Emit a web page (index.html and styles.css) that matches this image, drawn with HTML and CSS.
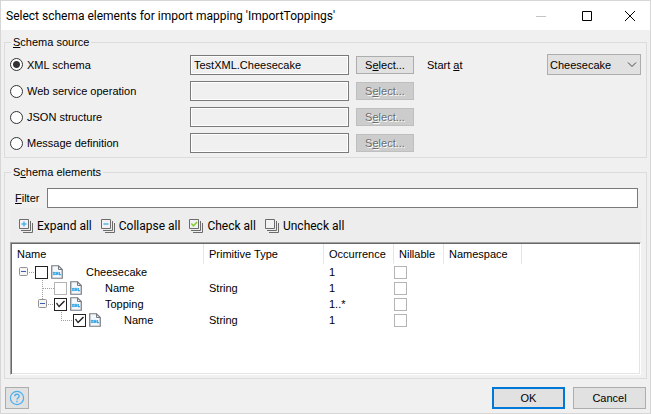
FILE: index.html
```html
<!DOCTYPE html>
<html lang="en">
<head>
<meta charset="utf-8">
<title>Select schema elements</title>
<link rel="stylesheet" href="styles.css">
</head>
<body>
<svg class="defs" aria-hidden="true">
  <symbol id="xml" viewBox="0 0 12 14">
    <path d="M.75 .75H7.5L11.25 4.5V13.25H.75Z" fill="#f4f8fb" stroke="#747a80" stroke-width="1.2"/>
    <path d="M7.5 .75V4.5H11.25" fill="none" stroke="#747a80"/>
    <path d="M2 7L4 10M4 7L2 10M5 10V7L6 9L7 7V10M8.5 7V9.6H10" fill="none" stroke="#3aa9e8" stroke-width="1.1"/>
  </symbol>
  <symbol id="stack" viewBox="0 0 14 14">
    <path d="M.5 .5H9.5V9.5H.5Z" fill="#f2f2f2" stroke="#6b6b6b"/>
    <path d="M2 11.5H11.5V2M4 13.5H13.5V4" fill="none" stroke="#6b6b6b"/>
  </symbol>
</svg>
<div class="dialog">
  <header class="titlebar">
    <h1>Select schema elements for import mapping 'ImportToppings'</h1>
    <div class="window-buttons">
      <button type="button" disabled aria-label="Minimize"><svg width="10" height="10"><path d="M0 5.5H10" stroke="#c4c4c4"/></svg></button>
      <button type="button" aria-label="Maximize"><svg width="10" height="10"><path d="M.5 .5H9.5V9.5H.5Z" fill="none" stroke="#000"/></svg></button>
      <button type="button" aria-label="Close"><svg width="10" height="10"><path d="M0 0L10 10M10 0L0 10" stroke="#000"/></svg></button>
    </div>
  </header>
  <form class="content">
    <fieldset class="source">
      <legend><u>S</u>chema source</legend>
      <div class="source-row">
        <label><input type="radio" name="source" checked>XML schema</label>
        <input class="field" type="text" aria-label="XML schema source" value="TestXML.Cheesecake" readonly>
        <button class="pick" type="button">S<u>e</u>lect...</button>
        <label class="start" for="start">Start <u>a</u>t</label>
        <span class="combo"><select id="start"><option>Cheesecake</option></select><svg width="10" height="6"><path d="M1 .5L5 4.5L9 .5" fill="none" stroke="#444"/></svg></span>
      </div>
      <div class="source-row">
        <label><input type="radio" name="source">Web service operation</label>
        <input class="field" type="text" aria-label="Web service operation source" readonly>
        <button class="pick" type="button" disabled>S<u>e</u>lect...</button>
      </div>
      <div class="source-row">
        <label><input type="radio" name="source">JSON structure</label>
        <input class="field" type="text" aria-label="JSON structure source" readonly>
        <button class="pick" type="button" disabled>S<u>e</u>lect...</button>
      </div>
      <div class="source-row">
        <label><input type="radio" name="source">Message definition</label>
        <input class="field" type="text" aria-label="Message definition source" readonly>
        <button class="pick" type="button" disabled>S<u>e</u>lect...</button>
      </div>
    </fieldset>
    <fieldset class="elements">
      <legend>S<u>c</u>hema elements</legend>
      <div class="filter"><label for="filter"><u>F</u>ilter</label><input class="field" id="filter" type="text"></div>
      <div class="toolbar">
        <button type="button"><svg width="14" height="14"><use href="#stack"/><path d="M5 2.5V7.5M2.5 5H7.5" stroke="#4aaff0" stroke-width="1.4"/></svg>Expand all</button>
        <button type="button"><svg width="14" height="14"><use href="#stack"/><path d="M2.5 5H7.5" stroke="#4aaff0" stroke-width="1.4"/></svg>Collapse all</button>
        <button type="button"><svg width="14" height="14"><use href="#stack"/><path d="M2.3 4.5L4.5 6.8L8 3" fill="none" stroke="#86cc30" stroke-width="1.5"/></svg>Check all</button>
        <button type="button"><svg width="14" height="14"><use href="#stack"/></svg>Uncheck all</button>
      </div>
      <div class="tree">
        <table>
          <colgroup><col class="c-name"><col class="c-type"><col class="c-occ"><col class="c-nil"><col class="c-ns"><col></colgroup>
          <thead><tr><th>Name</th><th>Primitive Type</th><th>Occurrence</th><th>Nillable</th><th>Namespace</th><td></td></tr></thead>
          <tbody>
            <tr>
              <td><div class="node"><svg width="23" height="16"><path d="M17 8.5H23" class="guide"/><rect x="7.5" y="3.5" width="8" height="8" rx="1" class="box"/><path d="M9 7.5H14" class="minus"/></svg><input type="checkbox" aria-label="Cheesecake"><svg class="doc" width="12" height="14"><use href="#xml"/></svg>Cheesecake</div></td>
              <td></td><td>1</td><td><input type="checkbox" disabled aria-label="Cheesecake nillable"></td><td></td><td></td>
            </tr>
            <tr>
              <td><div class="node"><svg width="42" height="16"><path d="M30.5 0V16M31 8.5H42" class="guide"/></svg><input type="checkbox" disabled aria-label="Name"><svg class="doc" width="12" height="14"><use href="#xml"/></svg>Name</div></td>
              <td>String</td><td>1</td><td><input type="checkbox" disabled aria-label="Name nillable"></td><td></td><td></td>
            </tr>
            <tr>
              <td><div class="node"><svg width="42" height="16"><path d="M30.5 0V3M36 8.5H42" class="guide"/><rect x="26.5" y="3.5" width="8" height="8" rx="1" class="box"/><path d="M28 7.5H33" class="minus"/></svg><input type="checkbox" checked aria-label="Topping"><svg class="doc" width="12" height="14"><use href="#xml"/></svg>Topping</div></td>
              <td></td><td>1..*</td><td><input type="checkbox" disabled aria-label="Topping nillable"></td><td></td><td></td>
            </tr>
            <tr>
              <td><div class="node"><svg width="61" height="16"><path d="M49.5 0V8M49 8.5H61" class="guide"/></svg><input type="checkbox" checked aria-label="Topping name"><svg class="doc" width="12" height="14"><use href="#xml"/></svg>Name</div></td>
              <td>String</td><td>1</td><td><input type="checkbox" disabled aria-label="Topping name nillable"></td><td></td><td></td>
            </tr>
          </tbody>
        </table>
      </div>
    </fieldset>
    <footer>
      <button class="help" type="button" aria-label="Help"><svg width="16" height="16"><circle cx="8" cy="8" r="6.6" fill="none" stroke="#4aaff0" stroke-width="1.2"/><path d="M5.8 6.3C5.8 3.6 10.2 3.6 10.2 6.2C10.2 7.8 8 7.8 8 9.6M8 10.8V12.3" fill="none" stroke="#4aaff0" stroke-width="1.4"/></svg></button>
      <button class="action ok" type="submit">OK</button>
      <button class="action" type="button">Cancel</button>
    </footer>
  </form>
</div>
</body>
</html>
```
FILE: styles.css
```css
* { box-sizing: border-box; }
body { margin: 0; background: #f0f0f0; color: #000; font: 11px/16px "Liberation Sans", Arial, sans-serif; }
button, input, select { margin: 0; padding: 0; font: inherit; color: inherit; border-radius: 0; }
svg { display: block; flex: none; }
.defs { position: absolute; width: 0; height: 0; }

.dialog { min-height: 100vh; display: flex; flex-direction: column; border: 1px solid #d6d6d6; }
.titlebar { display: flex; align-items: center; justify-content: space-between; height: 29px; padding-left: 5px; background: #fff; }
h1 { margin: 0; font: 12px/16px Roboto, sans-serif; }
.window-buttons { display: flex; }
.window-buttons button { display: grid; place-items: center; width: 46px; height: 26px; border: 0; background: none; }
.window-buttons button:last-child { width: 40px; }

.content { flex: 1; display: flex; flex-direction: column; padding: 4px 3px; }
fieldset { min-width: 0; margin: 0; border: 1px solid #dcdcdc; }
legend { margin-left: 1px; padding: 0 2px; }
.source { display: flex; flex-direction: column; gap: 6px; padding: 4px 5px; }
.source-row { display: flex; align-items: center; gap: 7px; }
.source-row label:first-child { display: flex; align-items: center; gap: 4px; width: 173px; }
.field { height: 20px; border: 1px solid #7a7a7a; background: #fff; outline: 0; padding: 0 3px; }
.source .field { width: 159px; background: #f0f0f0; box-shadow: inset 0 0 0 1px #fff; }
.pick { width: 58px; height: 18px; border: 1px solid #adadad; background: #e1e1e1; line-height: 14px; }
.pick:disabled { border-color: #bfbfbf; background: #ccc; color: #6d6d6d; text-shadow: 1px 1px #fff; }
.start { flex: 1; margin-left: 6px; }
.combo { display: grid; align-items: center; width: 94px; }
.combo select, .combo svg { grid-area: 1 / 1; }
.combo select { appearance: none; height: 21px; padding: 0 2px; border: 1px solid #adadad; background: #e1e1e1; }
.combo svg { justify-self: end; margin-right: 4px; pointer-events: none; }

input[type="radio"] { appearance: none; flex: none; width: 13px; height: 13px; border: 1px solid #333; border-radius: 50%; background: #fff; }
input[type="radio"]:checked { background: radial-gradient(circle, #333 3px, #fff 4px); }
input[type="checkbox"] { appearance: none; display: block; flex: none; width: 13px; height: 13px; border: 1px solid #222; background: #fff; }
input[type="checkbox"]:disabled { border-color: #b4b4b4; }
input[type="checkbox"]:checked::before { content: ""; display: block; height: 11px; background: #222; clip-path: polygon(1px 5px, 2px 4px, 4px 7px, 9px 2px, 10px 3px, 4px 9px); }

.elements { margin-top: 6px; padding: 8px 5px 3px; }
.filter { display: flex; gap: 8px; align-items: center; padding: 0 3px 0 5px; }
.filter .field { flex: 1; min-width: 0; }
.toolbar { display: flex; gap: 9px; height: 34px; padding: 2px 9px 0; background: #ededed; }
.toolbar button { display: flex; align-items: center; gap: 4px; border: 0; background: none; font: 12px/16px Roboto, sans-serif; white-space: nowrap; }
.tree { min-height: 133px; border: 1px solid; border-color: #a0a0a0 #fff #fff #a0a0a0; box-shadow: inset 1px 1px #696969, inset -1px -1px #e3e3e3; padding: 1px; background: #fff; }
table { width: 100%; table-layout: fixed; border-collapse: collapse; }
.c-name { width: 192px; }
.c-type { width: 120px; }
.c-occ { width: 70px; }
.c-nil { width: 50px; }
.c-ns { width: 78px; }
th, td { padding: 0; font-weight: normal; text-align: left; white-space: nowrap; }
th { height: 20px; padding-left: 5px; box-shadow: inset -1px 0 #e5e5e5; }
td:nth-child(2), td:nth-child(3) { padding-left: 5px; }
tbody tr { height: 16px; }
.node { display: flex; align-items: center; height: 16px; }
.doc { margin: 0 23px 0 3px; }
.guide { stroke: #a0a0a0; stroke-dasharray: 1 1; }
.box { fill: #f5f5f5; stroke: #919191; }
.minus { stroke: #3f5cae; }

footer { display: flex; align-items: center; gap: 8px; margin-top: 8px; padding: 0 1px; }
.help { display: grid; place-items: center; width: 24px; height: 22px; margin-right: auto; border: 1px solid #adadad; background: #e1e1e1; }
.action { width: 73px; height: 22px; border: 1px solid #adadad; background: #e1e1e1; }
.ok { border: 2px solid #0078d7; }
```
